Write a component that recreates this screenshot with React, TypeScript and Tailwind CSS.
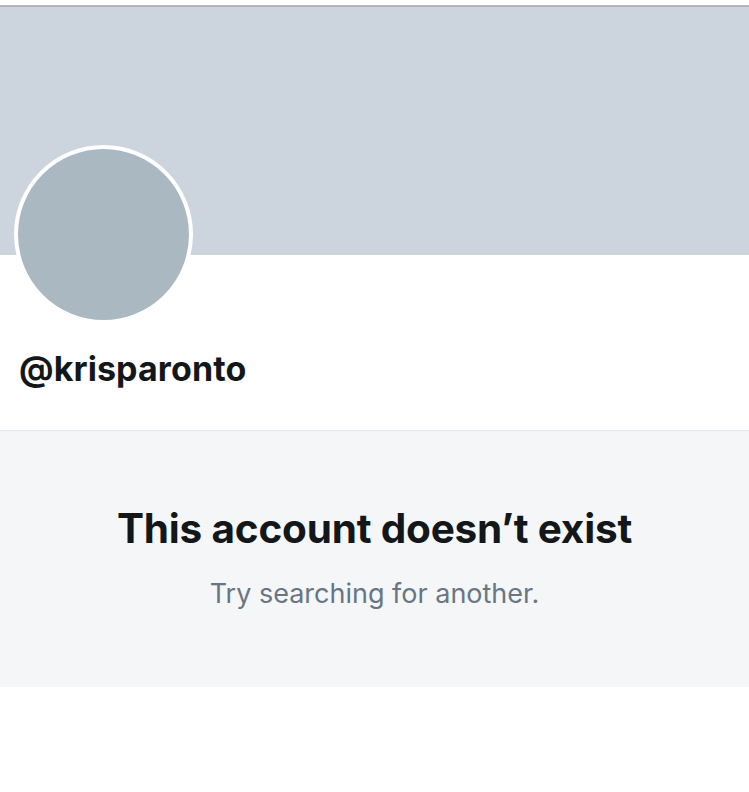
import React from 'react';

const App: React.FC = () => {
    return (
        <div className="w-[749px] h-[792px] bg-white overflow-hidden" style={{ fontFamily: 'Inter, "Noto Sans", sans-serif' }}>
            <div className="h-[5px] bg-white" />
            <div className="h-[2px] bg-[#b4b5b9]" />
            <div className="h-[248px] bg-[#ccd5dd]" />

            <div className="relative h-[175px]">
                <div className="absolute left-[14px] top-[-110px] w-[179px] h-[179px] rounded-full bg-[#aab8c2] border-[4px] border-white" />
                <div className="absolute left-[19px] top-[97px] text-[34px] leading-none font-bold text-[#14171a] tracking-[0.1px]">
                    @krisparonto
                </div>
            </div>

            <div className="h-[1px] bg-[#e1e6ec]" />
            <div className="h-[256px] bg-[#f5f6f8] flex flex-col items-center pt-[78px]">
                <h1 className="text-[40.5px] leading-none font-bold text-[#14171a] tracking-[-0.2px]">
                    This account doesn’t exist
                </h1>
                <p className="mt-[30px] text-[27px] leading-none text-[#687684]">
                    Try searching for another.
                </p>
            </div>
        </div>
    );
};

export default App;
